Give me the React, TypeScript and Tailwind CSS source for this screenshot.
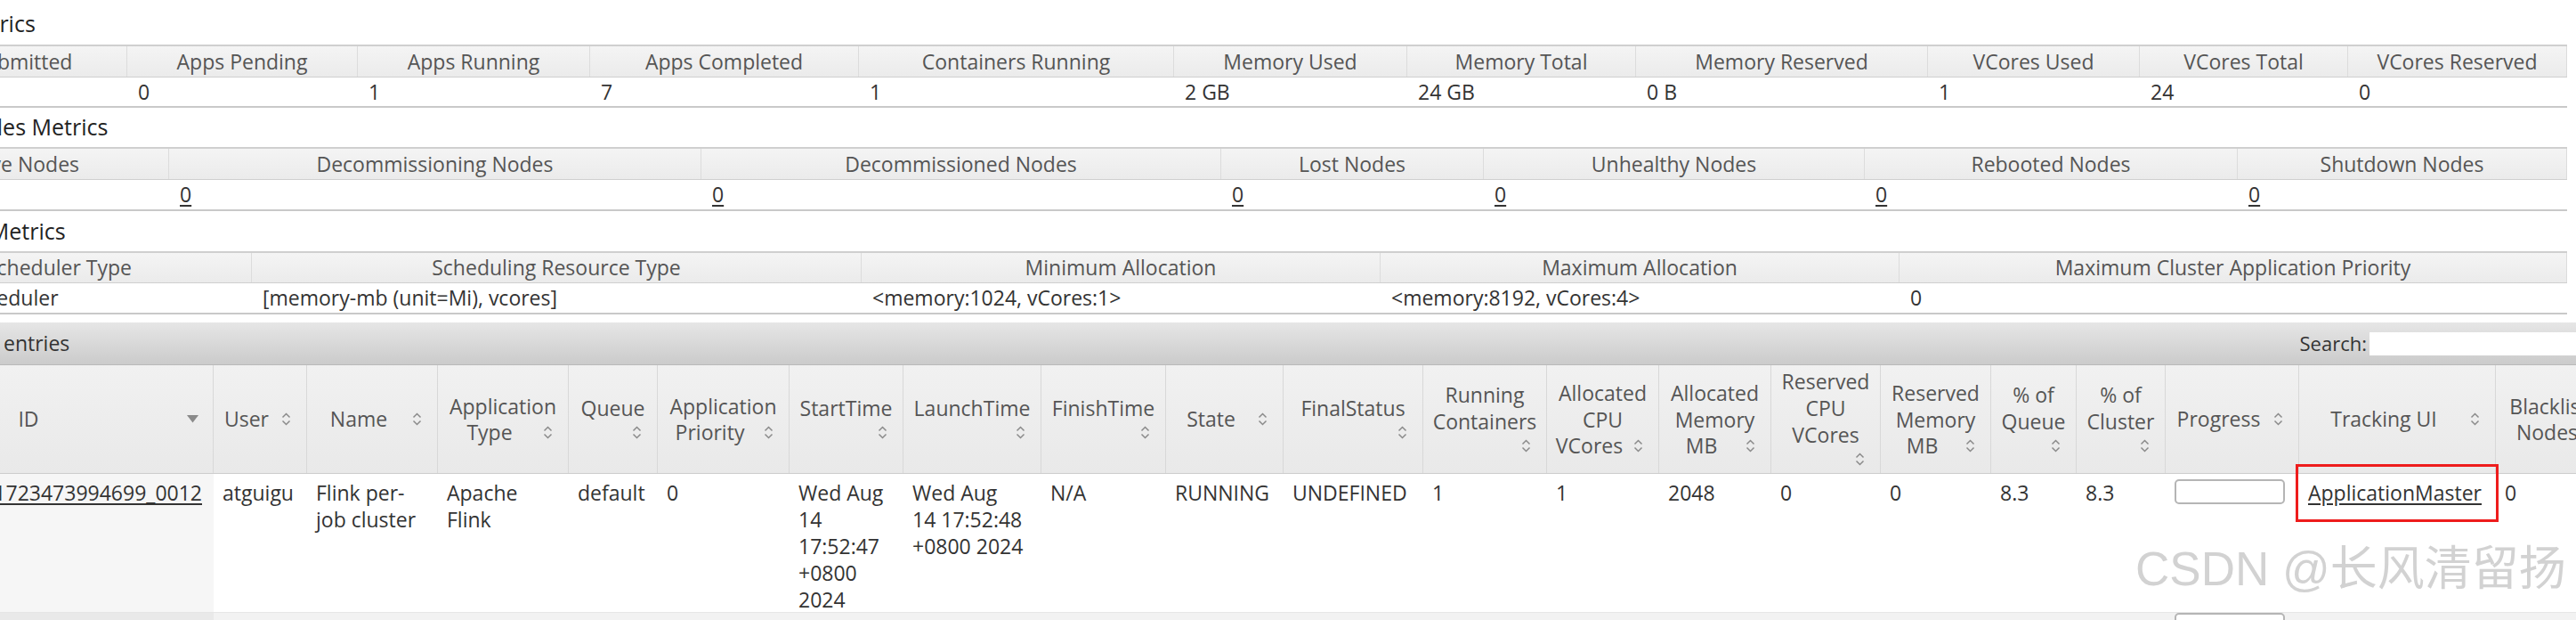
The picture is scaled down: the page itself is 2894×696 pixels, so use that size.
import React from "react";

type MCol = { w: string; h: string; v: string; link?: boolean };

const T1: MCol[] = [
  { w: "w-[293px]", h: "Apps Submitted", v: "8" },
  { w: "w-[259px]", h: "Apps Pending", v: "0" },
  { w: "w-[261px]", h: "Apps Running", v: "1" },
  { w: "w-[302px]", h: "Apps Completed", v: "7" },
  { w: "w-[354px]", h: "Containers Running", v: "1" },
  { w: "w-[262px]", h: "Memory Used", v: "2 GB" },
  { w: "w-[257px]", h: "Memory Total", v: "24 GB" },
  { w: "w-[328px]", h: "Memory Reserved", v: "0 B" },
  { w: "w-[238px]", h: "VCores Used", v: "1" },
  { w: "w-[234px]", h: "VCores Total", v: "24" },
  { w: "w-[246px]", h: "VCores Reserved", v: "0" },
];

const T2: MCol[] = [
  { w: "w-[340px]", h: "Active Nodes", v: "3", link: true },
  { w: "w-[598px]", h: "Decommissioning Nodes", v: "0", link: true },
  { w: "w-[584px]", h: "Decommissioned Nodes", v: "0", link: true },
  { w: "w-[295px]", h: "Lost Nodes", v: "0", link: true },
  { w: "w-[428px]", h: "Unhealthy Nodes", v: "0", link: true },
  { w: "w-[419px]", h: "Rebooted Nodes", v: "0", link: true },
  { w: "w-[370px]", h: "Shutdown Nodes", v: "0", link: true },
];

const T3: MCol[] = [
  { w: "w-[433px]", h: "Scheduler Type", v: "Capacity Scheduler" },
  { w: "w-[685px]", h: "Scheduling Resource Type", v: "[memory-mb (unit=Mi), vcores]" },
  { w: "w-[583px]", h: "Minimum Allocation", v: "<memory:1024, vCores:1>" },
  { w: "w-[583px]", h: "Maximum Allocation", v: "<memory:8192, vCores:4>" },
  { w: "w-[750px]", h: "Maximum Cluster Application Priority", v: "0" },
];

function Title({ text, h }: { text: string; h: string }) {
  return (
    <div className={`${h} flex items-center pl-[15px] text-[25px] text-[#222]`}>
      {text}
    </div>
  );
}

function MetricsTable({ cols, hh, dh }: { cols: MCol[]; hh: string; dh: string }) {
  return (
    <div className="w-[3034px]">
      <div className={`flex ${hh} border-t-2 border-b border-[#cfcfcf] bg-gradient-to-b from-[#f4f4f4] to-[#ebebeb]`}>
        {cols.map((c, i) => (
          <div
            key={i}
            className={`${c.w} shrink-0 flex items-center justify-center border-r border-[#dcdcdc] text-[#555] whitespace-nowrap`}
          >
            {c.h}
          </div>
        ))}
      </div>
      <div className={`flex ${dh} border-b-2 border-[#c9c9c9] bg-white`}>
        {cols.map((c, i) => (
          <div key={i} className={`${c.w} shrink-0 flex items-center pl-[12px] text-[#333] whitespace-nowrap`}>
            {c.link ? <span className="underline underline-offset-[3px]">{c.v}</span> : c.v}
          </div>
        ))}
      </div>
    </div>
  );
}

function SortIcon() {
  return (
    <svg width="11" height="17" viewBox="0 0 11 17">
      <path d="M1.5 6.5 L5.5 2.5 L9.5 6.5 M1.5 10.5 L5.5 14.5 L9.5 10.5" fill="none" stroke="#8a8a8a" strokeWidth="1.5" />
    </svg>
  );
}

function TriIcon() {
  return (
    <svg width="13" height="9" viewBox="0 0 13 9">
      <path d="M0 0 H13 L6.5 8.5 Z" fill="#8a8a8a" />
    </svg>
  );
}

type HCol = { w: string; lines: string[]; mode: "inline" | "own"; tri?: boolean };

const H: HCol[] = [
  { w: "w-[385px]", lines: ["ID"], mode: "inline", tri: true },
  { w: "w-[105px]", lines: ["User"], mode: "inline" },
  { w: "w-[147px]", lines: ["Name"], mode: "inline" },
  { w: "w-[147px]", lines: ["Application", "Type"], mode: "inline" },
  { w: "w-[100px]", lines: ["Queue"], mode: "own" },
  { w: "w-[148px]", lines: ["Application", "Priority"], mode: "inline" },
  { w: "w-[128px]", lines: ["StartTime"], mode: "own" },
  { w: "w-[155px]", lines: ["LaunchTime"], mode: "own" },
  { w: "w-[140px]", lines: ["FinishTime"], mode: "own" },
  { w: "w-[132px]", lines: ["State"], mode: "inline" },
  { w: "w-[157px]", lines: ["FinalStatus"], mode: "own" },
  { w: "w-[139px]", lines: ["Running", "Containers"], mode: "own" },
  { w: "w-[126px]", lines: ["Allocated", "CPU", "VCores"], mode: "inline" },
  { w: "w-[126px]", lines: ["Allocated", "Memory", "MB"], mode: "inline" },
  { w: "w-[123px]", lines: ["Reserved", "CPU", "VCores"], mode: "own" },
  { w: "w-[124px]", lines: ["Reserved", "Memory", "MB"], mode: "inline" },
  { w: "w-[96px]", lines: ["% of", "Queue"], mode: "own" },
  { w: "w-[100px]", lines: ["% of", "Cluster"], mode: "own" },
  { w: "w-[150px]", lines: ["Progress"], mode: "inline" },
  { w: "w-[221px]", lines: ["Tracking UI"], mode: "inline" },
  { w: "w-[146px]", lines: ["Blacklisted", "Nodes"], mode: "inline" },
];

function Th({ c }: { c: HCol }) {
  const icon = c.tri ? <TriIcon /> : <SortIcon />;
  return (
    <div className={`${c.w} shrink-0 flex flex-col justify-center px-[8px] border-r border-[#d8d8d8] text-[#555]`}>
      {c.lines.map((l, i) => {
        const last = i === c.lines.length - 1;
        if (last && c.mode === "inline") {
          return (
            <div key={i} className="flex h-[30px] items-center">
              <span className="flex-1 text-center whitespace-nowrap">{l}</span>
              <span className="w-[30px] flex justify-center">{icon}</span>
            </div>
          );
        }
        return (
          <div key={i} className="h-[30px] leading-[30px] text-center whitespace-nowrap">
            {l}
          </div>
        );
      })}
      {c.mode === "own" && (
        <div className="flex justify-end h-[26px] items-center">
          <span className="w-[30px] flex justify-center">{icon}</span>
        </div>
      )}
    </div>
  );
}

const D: React.ReactNode[][] = [
  [<span key="a" className="underline underline-offset-[3px]">application_1723473994699_0012</span>],
  ["atguigu"],
  ["Flink per-", "job cluster"],
  ["Apache", "Flink"],
  ["default"],
  ["0"],
  ["Wed Aug", "14", "17:52:47", "+0800", "2024"],
  ["Wed Aug", "14 17:52:48", "+0800 2024"],
  ["N/A"],
  ["RUNNING"],
  ["UNDEFINED"],
  ["1"],
  ["1"],
  ["2048"],
  ["0"],
  ["0"],
  ["8.3"],
  ["8.3"],
  ["__progress__"],
  [<span key="b" className="underline underline-offset-[3px]">ApplicationMaster</span>],
  ["0"],
];

function Td({ w, lines, first }: { w: string; lines: React.ReactNode[]; first?: boolean }) {
  return (
    <div className={`${w} shrink-0 pl-[10px] pt-[6px] leading-[30px] text-[#333] ${first ? "bg-[#f6f6f6]" : ""}`}>
      {lines.map((l, i) =>
        l === "__progress__" ? (
          <div key={i} className="w-[124px] h-[28px] rounded-[5px] border-2 border-[#b5b5b5] bg-white" />
        ) : (
          <div key={i} className="whitespace-nowrap">
            {l}
          </div>
        )
      )}
    </div>
  );
}

export default function App() {
  return (
    <div className="relative w-[2894px] h-[696px] overflow-hidden bg-white font-['Open_Sans','Noto_Sans',sans-serif] text-[23px]">
      <div className="ml-[-150px] w-[3044px]">
        <div className="h-[50px] flex items-center pt-[4px] pl-[15px] text-[25px] text-[#222]">Cluster Metrics</div>
        <MetricsTable cols={T1} hh="h-[37px]" dh="h-[34px]" />
        <Title text="Cluster Nodes Metrics" h="h-[44px]" />
        <MetricsTable cols={T2} hh="h-[37px]" dh="h-[35px]" />
        <Title text="Scheduler Metrics" h="h-[45px]" />
        <MetricsTable cols={T3} hh="h-[36px]" dh="h-[35px]" />
        <div className="h-[9px]" />
        <div className="h-[48px] w-[3044px] flex items-center justify-between bg-gradient-to-b from-[#e6e6e6] to-[#cbcbcb] border-b border-[#b9b9b9] text-[#333]">
          <div className="pl-[154px]">entries</div>
          <div className="flex items-center">
            <span className="text-[22px]">Search:</span>
            <div className="ml-[3px] w-[232px] h-[26px] bg-white" />
          </div>
        </div>
        <div className="ml-[5px] flex h-[122px] bg-gradient-to-b from-[#f1f1f1] to-[#e9e9e9] border-b border-[#cdcdcd]">
          {H.map((c, i) => (
            <Th key={i} c={c} />
          ))}
        </div>
        <div className="ml-[5px] flex h-[155px] bg-white">
          {H.map((c, i) => (
            <Td key={i} w={c.w} lines={D[i]} first={i === 0} />
          ))}
        </div>
        <div className="ml-[5px] flex h-[20px] bg-[#f2f2f2] border-t border-[#e6e6e6]">
          {H.map((c, i) => (
            <div key={i} className={`${c.w} shrink-0 pl-[10px] ${i === 0 ? "bg-[#e9e9e9]" : ""}`}>
              {i === 18 ? <div className="w-[124px] h-[28px] rounded-[5px] border-2 border-[#b5b5b5] bg-white" /> : null}
            </div>
          ))}
        </div>
      </div>
      <div className="absolute left-[2579px] top-[521px] w-[228px] h-[65px] border-[3px] border-[#ee1c1c]" />
      <div className="absolute left-[2399px] top-[604px] text-[53px] leading-[70px] whitespace-nowrap text-[#d2d2d2] font-['Liberation_Sans','Noto_Sans_CJK_SC',sans-serif] [text-shadow:0_0_2px_#ffffff]">
        CSDN @长风清留扬
      </div>
    </div>
  );
}
